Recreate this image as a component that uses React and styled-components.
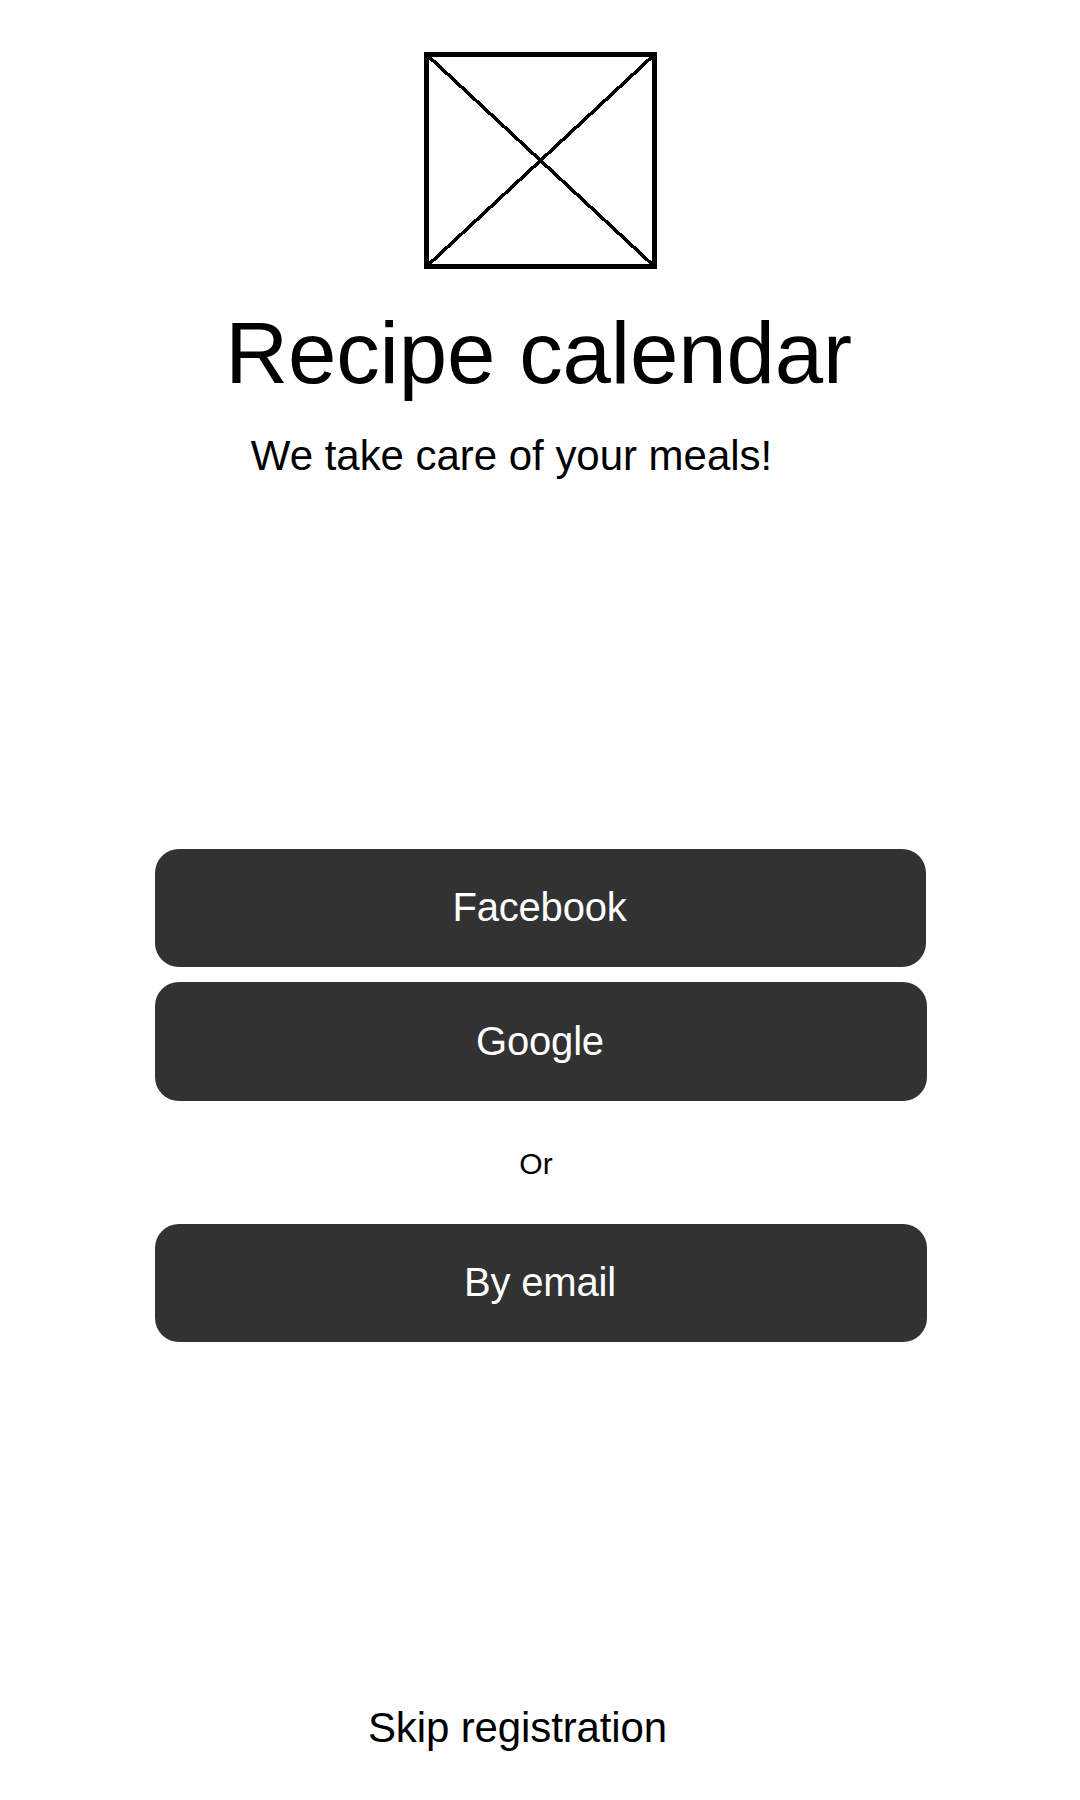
import React from "react";
import styled, { createGlobalStyle } from "styled-components";

const GlobalStyle = createGlobalStyle`
  *, *::before, *::after { box-sizing: border-box; }
  body { margin: 0; background: #fff; color: #000; font-family: "Liberation Sans", Arial, sans-serif; }
`;

const Screen = styled.main`
  width: 1080px;
  height: 1800px;
  display: flex;
  flex-direction: column;
  align-items: center;
  padding-top: 52px;
`;

const Logo = styled.svg`
  display: block;
  width: 233px;
  height: 217px;
  margin-left: 1px;
  flex-shrink: 0;
  overflow: visible;
`;

const Title = styled.h1`
  margin: 34px 3px 0 0;
  font-size: 87px;
  letter-spacing: -0.15px;
  line-height: 100px;
  font-weight: 400;
  white-space: nowrap;
`;

const Text = styled.p`
  margin: ${(p) => p.$margin || "0"};
  font-size: ${(p) => p.$size}px;
  line-height: ${(p) => p.$line}px;
  letter-spacing: ${(p) => p.$tracking || 0}px;
  white-space: nowrap;
`;

const Actions = styled.section`
  width: 772px;
  margin: 369px 0 0 2px;
  display: flex;
  flex-direction: column;
  align-items: center;
`;

const Button = styled.button`
  align-self: flex-start;
  width: ${(p) => p.$width || 772}px;
  height: ${(p) => p.$height || 118}px;
  flex-shrink: 0;
  margin: ${(p) => p.$gap || 0}px 0 0;
  padding: 0 2px ${(p) => p.$lift ?? 2}px 0;
  border: 0;
  border-radius: 24px;
  background: #323232;
  color: #fff;
  font-family: inherit;
  font-size: 40px;
  letter-spacing: -0.2px;
`;

export default function App() {
  return (
    <Screen>
      <GlobalStyle />
      <Logo viewBox="0 0 233 217" fill="none" stroke="#000">
        <rect x="2.5" y="2.5" width="228" height="212" strokeWidth="5" />
        <path
          d="M2 2L231 215M231 2L2 215"
          strokeWidth="3.5"
          strokeLinecap="square"
          shapeRendering="crispEdges"
        />
      </Logo>
      <Title>Recipe calendar</Title>
      <Text $size={42} $line={48} $tracking={-0.03} $margin="29px 57px 0 0">
        We take care of your meals!
      </Text>
      <Actions>
        <Button $width={771}>Facebook</Button>
        <Button $gap={15} $height={119} $lift={0}>Google</Button>
        <Text $size={30} $line={34} $margin="46px 10px 0 0">Or</Text>
        <Button $gap={43}>By email</Button>
      </Actions>
      <Text $size={42} $line={48} $tracking={-0.12} $margin="362px 45px 0 0">
        Skip registration
      </Text>
    </Screen>
  );
}
